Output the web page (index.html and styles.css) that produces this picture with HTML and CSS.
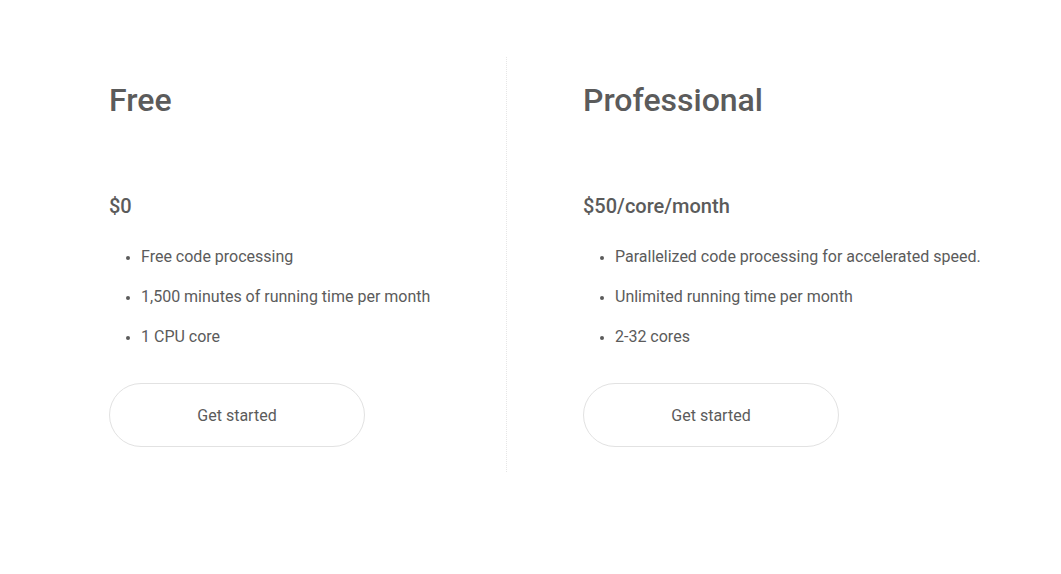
FILE: index.html
```html
<!DOCTYPE html>
<html>
<head>
<meta charset="utf-8">
<link rel="stylesheet" href="styles.css">
</head>
<body>
<div class="plans">
  <div class="plan plan-left">
    <h2 class="plan-title">Free</h2>
    <div class="plan-price">$0</div>
    <ul class="plan-features">
      <li>Free code processing</li>
      <li>1,500 minutes of running time per month</li>
      <li>1 CPU core</li>
    </ul>
    <a class="plan-button" href="#">Get started</a>
  </div>
  <div class="plan plan-right">
    <h2 class="plan-title">Professional</h2>
    <div class="plan-price">$50/core/month</div>
    <ul class="plan-features">
      <li>Parallelized code processing for accelerated speed.</li>
      <li>Unlimited running time per month</li>
      <li>2-32 cores</li>
    </ul>
    <a class="plan-button" href="#">Get started</a>
  </div>
</div>
</body>
</html>
```
FILE: styles.css
```css
html, body {
  margin: 0;
  padding: 0;
  background: #fff;
}
body {
  font-family: Roboto, "Liberation Sans", sans-serif;
  color: #5b5b5b;
}
.plans {
  display: flex;
  padding: 57px 0 0 109px;
}
.plan {
  display: flex;
  flex-direction: column;
  align-items: flex-start;
  padding-bottom: 25px;
}
.plan-left {
  width: 397px;
}
.plan-right {
  border-left: 1px dotted #e6e6e6;
  padding-left: 76px;
}
.plan-title {
  margin: 23px 0 0;
  font-size: 32px;
  font-weight: 500;
  line-height: 40px;
}
.plan-price {
  margin-top: 72px;
  font-size: 20px;
  font-weight: 500;
  line-height: 28px;
}
.plan-features {
  margin: 27px 0 0;
  padding: 0 0 0 32px;
  list-style: disc;
}
.plan-features li {
  font-size: 16px;
  line-height: 20px;
  margin-bottom: 20px;
}
.plan-features li::marker {
  font-size: 14px;
}
.plan-button {
  margin-top: 16px;
  width: 254px;
  height: 62px;
  border: 1px solid #e2e2e2;
  border-radius: 32px;
  display: flex;
  align-items: center;
  justify-content: center;
  font-size: 16px;
  color: #5b5b5b;
  text-decoration: none;
}
```
